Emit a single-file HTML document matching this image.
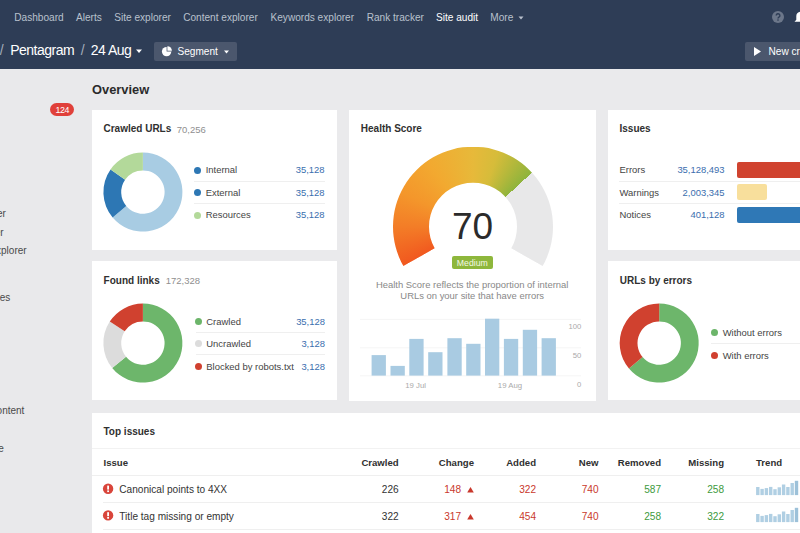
<!DOCTYPE html><html><head><meta charset="utf-8"><style>
*{margin:0;padding:0;box-sizing:border-box}
html,body{width:800px;height:533px;overflow:hidden;background:#eaeaec;font-family:"Liberation Sans", sans-serif}
.t{position:absolute;white-space:nowrap}
.card{position:absolute;background:#fff}
.hl{position:absolute;height:1px;background:#efefef}
svg{position:absolute;left:0;top:0}
</style></head><body>
<div style="position:absolute;left:0;top:0;width:800px;height:69px;background:#2e3d56"></div><div style="position:absolute;left:0;top:69px;width:90px;height:464px;background:#e9e9eb"></div><div class="t" style="left:14.30px;top:13.45px;font-size:10.1px;line-height:10.1px;color:#b9c1cd;font-weight:normal;">Dashboard</div>
<div class="t" style="left:76.00px;top:13.45px;font-size:10.1px;line-height:10.1px;color:#b9c1cd;font-weight:normal;">Alerts</div>
<div class="t" style="left:114.20px;top:13.45px;font-size:10.1px;line-height:10.1px;color:#b9c1cd;font-weight:normal;">Site explorer</div>
<div class="t" style="left:183.20px;top:13.45px;font-size:10.1px;line-height:10.1px;color:#b9c1cd;font-weight:normal;">Content explorer</div>
<div class="t" style="left:270.50px;top:13.45px;font-size:10.1px;line-height:10.1px;color:#b9c1cd;font-weight:normal;">Keywords explorer</div>
<div class="t" style="left:366.70px;top:13.45px;font-size:10.1px;line-height:10.1px;color:#b9c1cd;font-weight:normal;">Rank tracker</div>
<div class="t" style="left:436.00px;top:13.45px;font-size:10.1px;line-height:10.1px;color:#ffffff;font-weight:normal;">Site audit</div>
<div class="t" style="left:490.30px;top:13.45px;font-size:10.1px;line-height:10.1px;color:#b9c1cd;font-weight:normal;">More</div>
<svg width="800" height="533" style="pointer-events:none"><path d="M518.5,16.5 L523.5,16.5 L521,19.5 Z" fill="#b9c1cd"/></svg><svg width="800" height="533"><circle cx="778" cy="17" r="6" fill="#6c778a"/><path d="M776.2,15.6 A1.85,1.85 0 1 1 778.9,17.2 C778.3,17.6 778,17.8 778,18.6" stroke="#2e3d56" stroke-width="1.4" fill="none"/><circle cx="778" cy="20.1" r="0.8" fill="#2e3d56"/><path d="M794.5,21.8 L796.3,19.8 L796.3,16 A4.2,4.2 0 0 1 804.7,16 L804.7,19.8 L806.5,21.8 Z" fill="#fff"/></svg><div class="t" style="left:-0.30px;top:43.35px;font-size:14px;line-height:14px;color:#a3acba;font-weight:normal;letter-spacing:-0.5px">/</div>
<div class="t" style="left:10.20px;top:43.35px;font-size:14px;line-height:14px;color:#ffffff;font-weight:normal;letter-spacing:-0.5px">Pentagram</div>
<div class="t" style="left:80.80px;top:43.35px;font-size:14px;line-height:14px;color:#a3acba;font-weight:normal;letter-spacing:-0.5px">/</div>
<div class="t" style="left:90.80px;top:43.35px;font-size:14px;line-height:14px;color:#ffffff;font-weight:normal;letter-spacing:-0.5px">24 Aug</div>
<svg width="800" height="533"><path d="M136,49.5 L142,49.5 L139,53 Z" fill="#ffffff"/></svg><div style="position:absolute;left:154px;top:42px;width:83px;height:19px;background:#4b576d;border-radius:2px"></div><svg width="800" height="533"><circle cx="166.6" cy="51.6" r="4.7" fill="#fff"/><path d="M166.6,51.6 L166.6,46.9 A4.7,4.7 0 0 1 171.3,51.6 Z" fill="#4b576d"/><path d="M167.4,50.8 L167.4,46.3 A4.5,4.5 0 0 1 171.9,50.8 Z" fill="#fff"/></svg><div class="t" style="left:177.50px;top:47.45px;font-size:10.1px;line-height:10.1px;color:#ffffff;font-weight:normal;">Segment</div>
<svg width="800" height="533"><path d="M224,50.6 L229,50.6 L226.5,53.6 Z" fill="#fff"/></svg><div style="position:absolute;left:745px;top:42px;width:70px;height:19px;background:#4b576d;border-radius:2px"></div><svg width="800" height="533"><path d="M754,47 L761,51.5 L754,56 Z" fill="#fff"/></svg><div class="t" style="left:768.50px;top:47.45px;font-size:10.1px;line-height:10.1px;color:#ffffff;font-weight:normal;">New crawl</div>
<div class="t" style="right:794.20px;top:208.73px;font-size:10px;line-height:10px;color:#4a4a4a;font-weight:normal;">Site explorer</div>
<div class="t" style="right:796.40px;top:227.73px;font-size:10px;line-height:10px;color:#4a4a4a;font-weight:normal;">Explorer</div>
<div class="t" style="right:773.40px;top:246.23px;font-size:10px;line-height:10px;color:#4a4a4a;font-weight:normal;">Content explorer</div>
<div class="t" style="right:789.70px;top:292.74px;font-size:10px;line-height:10px;color:#4a4a4a;font-weight:normal;">Pages</div>
<div class="t" style="right:775.60px;top:406.34px;font-size:10px;line-height:10px;color:#4a4a4a;font-weight:normal;">Content</div>
<div class="t" style="right:796.30px;top:443.84px;font-size:10px;line-height:10px;color:#4a4a4a;font-weight:normal;">Page</div>
<div style="position:absolute;left:50px;top:103px;width:24px;height:13px;border-radius:7px;background:#e0403a"></div><div class="t" style="left:-237.80px;width:600px;text-align:center;top:105.57px;font-size:8.9px;line-height:8.9px;color:#fff;font-weight:normal;letter-spacing:-0.5px">124</div>
<div class="t" style="left:92.00px;top:84.32px;font-size:12.85px;line-height:12.85px;color:#2b2b2b;font-weight:bold;">Overview</div>
<div class="card" style="left:91.5px;top:110px;width:245.7px;height:140px"></div><div class="card" style="left:349px;top:110px;width:247px;height:290.5px"></div><div class="card" style="left:607.5px;top:110px;width:204.5px;height:139.5px"></div><div class="card" style="left:91.5px;top:261.2px;width:245.7px;height:139.3px"></div><div class="card" style="left:607.5px;top:261.2px;width:204.5px;height:139.3px"></div><div class="card" style="left:91.5px;top:412.8px;width:720.5px;height:127.19999999999999px"></div><div class="t" style="left:103.50px;top:124.13px;font-size:10px;line-height:10px;color:#303030;font-weight:bold;">Crawled URLs</div>
<div class="t" style="left:176.80px;top:124.56px;font-size:9.5px;line-height:9.5px;color:#8f8f8f;font-weight:normal;">70,256</div>
<div class="t" style="left:360.80px;top:124.13px;font-size:10px;line-height:10px;color:#303030;font-weight:bold;">Health Score</div>
<div class="t" style="left:619.50px;top:124.34px;font-size:10px;line-height:10px;color:#303030;font-weight:bold;">Issues</div>
<div class="t" style="left:103.60px;top:275.54px;font-size:10px;line-height:10px;color:#303030;font-weight:bold;">Found links</div>
<div class="t" style="left:165.70px;top:275.96px;font-size:9.5px;line-height:9.5px;color:#8f8f8f;font-weight:normal;">172,328</div>
<div class="t" style="left:619.80px;top:275.64px;font-size:10px;line-height:10px;color:#303030;font-weight:bold;">URLs by errors</div>
<div class="t" style="left:103.50px;top:427.34px;font-size:10px;line-height:10px;color:#303030;font-weight:bold;">Top issues</div>
<div style="position:absolute;left:193.5px;top:166.5px;width:7px;height:7px;border-radius:50%;background:#2d77b4"></div><div class="t" style="left:205.70px;top:165.40px;font-size:9.45px;line-height:9.45px;color:#444;font-weight:normal;">Internal</div>
<div class="t" style="right:475.40px;top:165.40px;font-size:9.45px;line-height:9.45px;color:#3a6eae;font-weight:normal;">35,128</div>
<div style="position:absolute;left:193.5px;top:189.1px;width:7px;height:7px;border-radius:50%;background:#2d77b4"></div><div class="t" style="left:205.70px;top:188.00px;font-size:9.45px;line-height:9.45px;color:#444;font-weight:normal;">External</div>
<div class="t" style="right:475.40px;top:188.00px;font-size:9.45px;line-height:9.45px;color:#3a6eae;font-weight:normal;">35,128</div>
<div style="position:absolute;left:193.5px;top:211.5px;width:7px;height:7px;border-radius:50%;background:#b3d99a"></div><div class="t" style="left:205.70px;top:210.40px;font-size:9.45px;line-height:9.45px;color:#444;font-weight:normal;">Resources</div>
<div class="t" style="right:475.40px;top:210.40px;font-size:9.45px;line-height:9.45px;color:#3a6eae;font-weight:normal;">35,128</div>
<div class="hl" style="left:194px;top:181px;width:131px"></div><div class="hl" style="left:194px;top:203px;width:131px"></div><div style="position:absolute;left:194.5px;top:318.1px;width:7px;height:7px;border-radius:50%;background:#6cb56a"></div><div class="t" style="left:206.30px;top:317.00px;font-size:9.45px;line-height:9.45px;color:#444;font-weight:normal;">Crawled</div>
<div class="t" style="right:475.00px;top:317.00px;font-size:9.45px;line-height:9.45px;color:#3a6eae;font-weight:normal;">35,128</div>
<div style="position:absolute;left:194.5px;top:340.2px;width:7px;height:7px;border-radius:50%;background:#dcdcdc"></div><div class="t" style="left:206.30px;top:339.10px;font-size:9.45px;line-height:9.45px;color:#444;font-weight:normal;">Uncrawled</div>
<div class="t" style="right:475.00px;top:339.10px;font-size:9.45px;line-height:9.45px;color:#3a6eae;font-weight:normal;">3,128</div>
<div style="position:absolute;left:194.5px;top:363.0px;width:7px;height:7px;border-radius:50%;background:#d0402f"></div><div class="t" style="left:206.30px;top:361.90px;font-size:9.45px;line-height:9.45px;color:#444;font-weight:normal;">Blocked by robots.txt</div>
<div class="t" style="right:475.00px;top:361.90px;font-size:9.45px;line-height:9.45px;color:#3a6eae;font-weight:normal;">3,128</div>
<div class="hl" style="left:196px;top:332px;width:129px"></div><div class="hl" style="left:196px;top:354px;width:129px"></div><div style="position:absolute;left:711px;top:329.4px;width:7px;height:7px;border-radius:50%;background:#6cb56a"></div><div class="t" style="left:722.70px;top:328.30px;font-size:9.45px;line-height:9.45px;color:#444;font-weight:normal;">Without errors</div>
<div style="position:absolute;left:711px;top:352.1px;width:7px;height:7px;border-radius:50%;background:#d0402f"></div><div class="t" style="left:722.70px;top:351.00px;font-size:9.45px;line-height:9.45px;color:#444;font-weight:normal;">With errors</div>
<div class="hl" style="left:711px;top:343px;width:100px"></div><div class="t" style="left:619.50px;top:165.30px;font-size:9.45px;line-height:9.45px;color:#444;font-weight:normal;">Errors</div>
<div class="t" style="right:75.40px;top:165.30px;font-size:9.45px;line-height:9.45px;color:#3a6eae;font-weight:normal;">35,128,493</div>
<div class="t" style="left:619.50px;top:187.60px;font-size:9.45px;line-height:9.45px;color:#444;font-weight:normal;">Warnings</div>
<div class="t" style="right:75.40px;top:187.60px;font-size:9.45px;line-height:9.45px;color:#3a6eae;font-weight:normal;">2,003,345</div>
<div class="t" style="left:619.50px;top:210.40px;font-size:9.45px;line-height:9.45px;color:#444;font-weight:normal;">Notices</div>
<div class="t" style="right:75.40px;top:210.40px;font-size:9.45px;line-height:9.45px;color:#3a6eae;font-weight:normal;">401,128</div>
<div class="hl" style="left:619px;top:181px;width:190px"></div><div class="hl" style="left:619px;top:203px;width:190px"></div><div style="position:absolute;left:736.6px;top:162px;width:80px;height:16px;border-radius:2px;background:#d0432f"></div><div style="position:absolute;left:736.6px;top:184.3px;width:30.4px;height:16px;border-radius:2px;background:#f8df9c"></div><div style="position:absolute;left:736.6px;top:206.8px;width:80px;height:16px;border-radius:2px;background:#2f78b6"></div><svg width="800" height="533"><path d="M142.90,152.60 A39.5,39.5 0 1 1 112.64,217.49 L126.28,206.05 A21.7,21.7 0 1 0 142.90,170.40 Z" fill="#a8cce3"/><path d="M112.64,217.49 A39.5,39.5 0 0 1 110.54,169.44 L125.12,179.65 A21.7,21.7 0 0 0 126.28,206.05 Z" fill="#2d77b4"/><path d="M110.54,169.44 A39.5,39.5 0 0 1 142.90,152.60 L142.90,170.40 A21.7,21.7 0 0 0 125.12,179.65 Z" fill="#b3d99a"/><path d="M142.90,303.60 A39.5,39.5 0 1 1 112.20,367.96 L126.04,356.76 A21.7,21.7 0 1 0 142.90,321.40 Z" fill="#6db66b"/><path d="M112.20,367.96 A39.5,39.5 0 0 1 109.77,321.59 L124.70,331.28 A21.7,21.7 0 0 0 126.04,356.76 Z" fill="#dcdcdc"/><path d="M109.77,321.59 A39.5,39.5 0 0 1 142.90,303.60 L142.90,321.40 A21.7,21.7 0 0 0 124.70,331.28 Z" fill="#d0412f"/><path d="M659.20,303.60 A39.5,39.5 0 1 1 628.94,368.49 L642.58,357.05 A21.7,21.7 0 1 0 659.20,321.40 Z" fill="#6db66b"/><path d="M628.94,368.49 A39.5,39.5 0 0 1 659.20,303.60 L659.20,321.40 A21.7,21.7 0 0 0 642.58,357.05 Z" fill="#d0412f"/><defs><linearGradient id="g" x1="0" y1="1" x2="1" y2="0"><stop offset="0" stop-color="#f25a22"/><stop offset="0.35" stop-color="#f6a12c"/><stop offset="0.6" stop-color="#e5bd3b"/><stop offset="1" stop-color="#8ab23c"/></linearGradient></defs><rect x="360" y="318.9" width="221" height="0.7" fill="#f1f1f1"/><rect x="360" y="347.5" width="221" height="0.7" fill="#f1f1f1"/><rect x="360" y="375.5" width="221" height="0.7" fill="#f1f1f1"/><rect x="371.6" y="355.1" width="14.3" height="20.5" fill="#a9cbe2"/><rect x="390.5" y="365.9" width="14.3" height="9.7" fill="#a9cbe2"/><rect x="409.3" y="338.9" width="14.3" height="36.7" fill="#a9cbe2"/><rect x="428.2" y="352.2" width="14.3" height="23.4" fill="#a9cbe2"/><rect x="447.4" y="338.2" width="14.3" height="37.4" fill="#a9cbe2"/><rect x="466.2" y="343.8" width="14.3" height="31.8" fill="#a9cbe2"/><rect x="485.0" y="318.7" width="14.3" height="56.9" fill="#a9cbe2"/><rect x="503.9" y="338.9" width="14.3" height="36.7" fill="#a9cbe2"/><rect x="522.8" y="329.8" width="14.3" height="45.8" fill="#a9cbe2"/><rect x="541.6" y="338.2" width="14.3" height="37.4" fill="#a9cbe2"/></svg><div style="position:absolute;left:393px;top:146.7px;width:160px;height:160px;background:conic-gradient(from -119.5deg, #f1581f 0deg, #f37d27 30deg, #f4962b 55deg, #f2a930 85deg, #e7b93a 119.5deg, #d6bc3a 138deg, #b4b83b 152deg, #8fb43c 166.8deg, #e8e8e9 166.8deg, #e8e8e9 239deg, transparent 239deg);clip-path:path('M10.37,119.39 A80,80 0 1 1 149.63,119.39 L118.30,101.67 A44,44 0 1 0 41.70,101.67 Z')"></div><div class="t" style="left:172.60px;width:600px;text-align:center;top:207.88px;font-size:37px;line-height:37px;color:#2b2b2b;font-weight:normal;">70</div>
<div style="position:absolute;left:452.3px;top:256px;width:40.3px;height:12.5px;border-radius:2px;background:#8eb73c"></div><div class="t" style="left:172.30px;width:600px;text-align:center;top:258.84px;font-size:8.7px;line-height:8.7px;color:#f4f7e4;font-weight:normal;">Medium</div>
<div class="t" style="left:172.20px;width:600px;text-align:center;top:279.50px;font-size:9.45px;line-height:9.45px;color:#888;font-weight:normal;">Health Score reflects the proportion of internal</div>
<div class="t" style="left:172.20px;width:600px;text-align:center;top:290.80px;font-size:9.45px;line-height:9.45px;color:#888;font-weight:normal;">URLs on your site that have errors</div>
<div class="t" style="right:218.70px;top:323.48px;font-size:7.7px;line-height:7.7px;color:#aaa;font-weight:normal;">100</div>
<div class="t" style="right:218.70px;top:351.98px;font-size:7.7px;line-height:7.7px;color:#aaa;font-weight:normal;">50</div>
<div class="t" style="right:218.70px;top:381.48px;font-size:7.7px;line-height:7.7px;color:#aaa;font-weight:normal;">0</div>
<div class="t" style="left:115.70px;width:600px;text-align:center;top:381.90px;font-size:7.8px;line-height:7.8px;color:#aaa;font-weight:normal;">19 Jul</div>
<div class="t" style="left:210.00px;width:600px;text-align:center;top:381.90px;font-size:7.8px;line-height:7.8px;color:#aaa;font-weight:normal;">19 Aug</div>
<div class="hl" style="left:91.5px;top:448px;width:710px;background:#f2f2f2"></div><div class="t" style="left:103.50px;top:458.07px;font-size:9.6px;line-height:9.6px;color:#303030;font-weight:bold;">Issue</div>
<div class="t" style="right:401.30px;top:458.07px;font-size:9.6px;line-height:9.6px;color:#303030;font-weight:bold;">Crawled</div>
<div class="t" style="right:326.00px;top:458.07px;font-size:9.6px;line-height:9.6px;color:#303030;font-weight:bold;">Change</div>
<div class="t" style="right:264.00px;top:458.07px;font-size:9.6px;line-height:9.6px;color:#303030;font-weight:bold;">Added</div>
<div class="t" style="right:201.50px;top:458.07px;font-size:9.6px;line-height:9.6px;color:#303030;font-weight:bold;">New</div>
<div class="t" style="right:139.00px;top:458.07px;font-size:9.6px;line-height:9.6px;color:#303030;font-weight:bold;">Removed</div>
<div class="t" style="right:76.00px;top:458.07px;font-size:9.6px;line-height:9.6px;color:#303030;font-weight:bold;">Missing</div>
<div class="t" style="left:756.00px;top:458.07px;font-size:9.6px;line-height:9.6px;color:#303030;font-weight:bold;">Trend</div>
<div class="hl" style="left:91.5px;top:475px;width:710px"></div><div class="hl" style="left:103px;top:502px;width:700px"></div><div class="hl" style="left:103px;top:529px;width:700px"></div><svg width="800" height="533"><circle cx="108.1" cy="488.8" r="5.2" fill="#d9453b"/><rect x="107.2" y="485.6" width="1.8" height="4" fill="#fff"/><rect x="107.2" y="490.4" width="1.8" height="1.7" fill="#fff"/></svg><div class="t" style="left:119.30px;top:484.95px;font-size:10.1px;line-height:10.1px;color:#333;font-weight:normal;">Canonical points to 4XX</div>
<div class="t" style="right:401.30px;top:484.95px;font-size:10.1px;line-height:10.1px;color:#333;font-weight:normal;">226</div>
<div class="t" style="right:339.00px;top:484.95px;font-size:10.1px;line-height:10.1px;color:#c9382c;font-weight:normal;">148</div>
<svg width="800" height="533"><path d="M467.2,492.5 L473.8,492.5 L470.5,486.90000000000003 Z" fill="#c9382c"/></svg><div class="t" style="right:264.00px;top:484.95px;font-size:10.1px;line-height:10.1px;color:#c9382c;font-weight:normal;">322</div>
<div class="t" style="right:201.50px;top:484.95px;font-size:10.1px;line-height:10.1px;color:#c9382c;font-weight:normal;">740</div>
<div class="t" style="right:139.00px;top:484.95px;font-size:10.1px;line-height:10.1px;color:#3d9a3d;font-weight:normal;">587</div>
<div class="t" style="right:76.00px;top:484.95px;font-size:10.1px;line-height:10.1px;color:#3d9a3d;font-weight:normal;">258</div>
<svg width="800" height="533"><rect x="756.1" y="487.0" width="3.4" height="8.1" fill="#b0cfe3"/><rect x="760.4" y="488.9" width="3.4" height="6.2" fill="#b0cfe3"/><rect x="764.7" y="488.1" width="3.4" height="7" fill="#b0cfe3"/><rect x="769.0" y="486.9" width="3.4" height="8.2" fill="#b0cfe3"/><rect x="773.3" y="489.2" width="3.4" height="5.9" fill="#b0cfe3"/><rect x="777.6" y="487.3" width="3.4" height="7.8" fill="#b0cfe3"/><rect x="781.9" y="484.5" width="3.4" height="10.6" fill="#b0cfe3"/><rect x="786.2" y="487.0" width="3.4" height="8.1" fill="#b0cfe3"/><rect x="790.5" y="483.0" width="3.4" height="12.1" fill="#b0cfe3"/><rect x="794.8" y="480.8" width="3.4" height="14.3" fill="#9dc1d9"/></svg><svg width="800" height="533"><circle cx="108.1" cy="515.4" r="5.2" fill="#d9453b"/><rect x="107.2" y="512.2" width="1.8" height="4" fill="#fff"/><rect x="107.2" y="517.0" width="1.8" height="1.7" fill="#fff"/></svg><div class="t" style="left:119.30px;top:511.95px;font-size:10.1px;line-height:10.1px;color:#333;font-weight:normal;">Title tag missing or empty</div>
<div class="t" style="right:401.30px;top:511.95px;font-size:10.1px;line-height:10.1px;color:#333;font-weight:normal;">322</div>
<div class="t" style="right:339.00px;top:511.95px;font-size:10.1px;line-height:10.1px;color:#c9382c;font-weight:normal;">317</div>
<svg width="800" height="533"><path d="M467.2,519.5 L473.8,519.5 L470.5,513.9 Z" fill="#c9382c"/></svg><div class="t" style="right:264.00px;top:511.95px;font-size:10.1px;line-height:10.1px;color:#c9382c;font-weight:normal;">454</div>
<div class="t" style="right:201.50px;top:511.95px;font-size:10.1px;line-height:10.1px;color:#c9382c;font-weight:normal;">740</div>
<div class="t" style="right:139.00px;top:511.95px;font-size:10.1px;line-height:10.1px;color:#3d9a3d;font-weight:normal;">258</div>
<div class="t" style="right:76.00px;top:511.95px;font-size:10.1px;line-height:10.1px;color:#3d9a3d;font-weight:normal;">322</div>
<svg width="800" height="533"><rect x="756.1" y="514.0" width="3.4" height="8.1" fill="#b0cfe3"/><rect x="760.4" y="515.9" width="3.4" height="6.2" fill="#b0cfe3"/><rect x="764.7" y="515.1" width="3.4" height="7" fill="#b0cfe3"/><rect x="769.0" y="513.9" width="3.4" height="8.2" fill="#b0cfe3"/><rect x="773.3" y="516.2" width="3.4" height="5.9" fill="#b0cfe3"/><rect x="777.6" y="514.3" width="3.4" height="7.8" fill="#b0cfe3"/><rect x="781.9" y="511.5" width="3.4" height="10.6" fill="#b0cfe3"/><rect x="786.2" y="514.0" width="3.4" height="8.1" fill="#b0cfe3"/><rect x="790.5" y="510.0" width="3.4" height="12.1" fill="#b0cfe3"/><rect x="794.8" y="507.8" width="3.4" height="14.3" fill="#9dc1d9"/></svg></body></html>
